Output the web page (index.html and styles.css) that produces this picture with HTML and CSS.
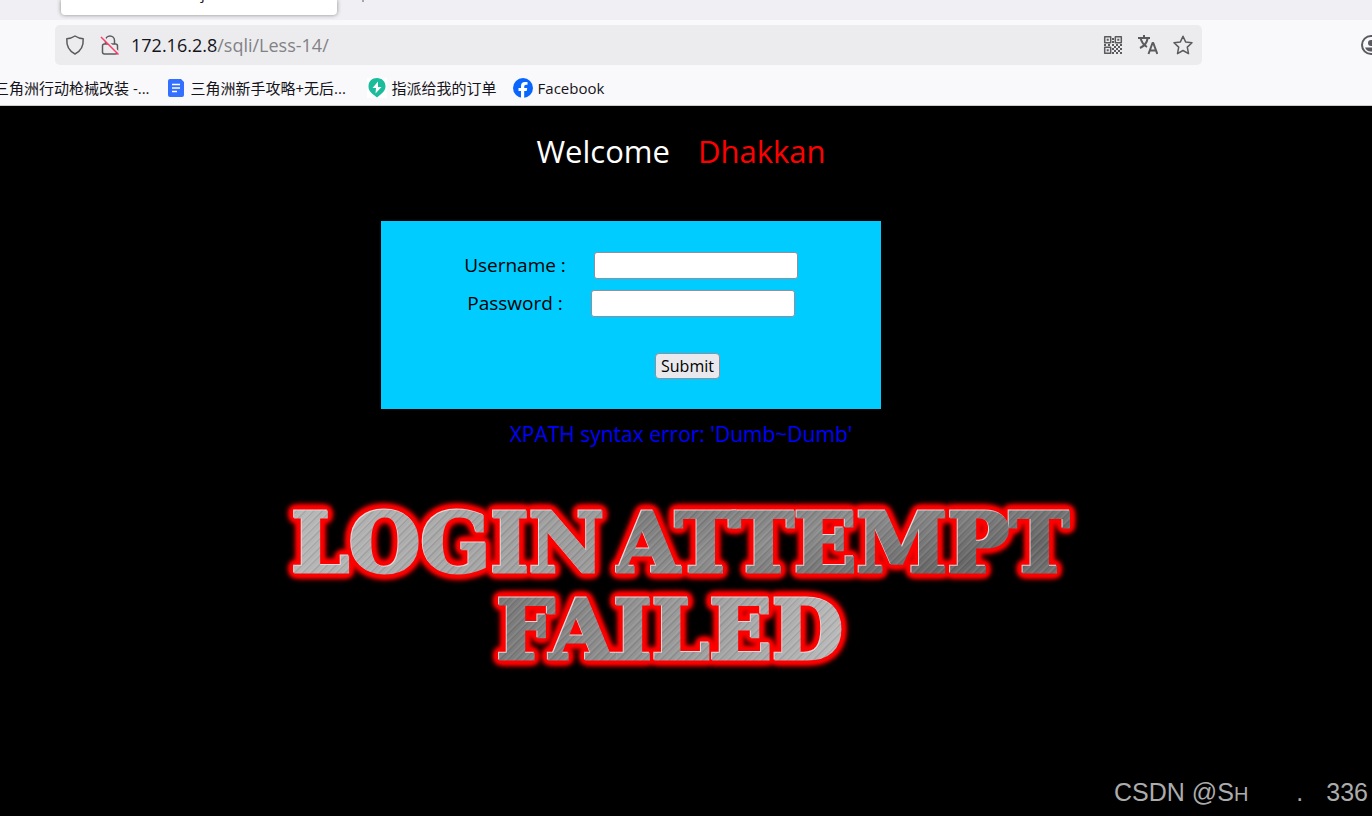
FILE: index.html
```html
<!DOCTYPE html>
<html lang="zh-CN">
<head>
<meta charset="utf-8">
<meta name="viewport" content="width=device-width, initial-scale=1">
<title>Less-14</title>
<link rel="stylesheet" href="styles.css">
</head>
<body>
<header class="browser">
  <div class="tabstrip">
    <div class="tab"><span class="tab-title">j</span></div>
    <button class="new-tab" type="button" aria-label="New tab"><svg width="16" height="16" viewBox="0 0 16 16"><path d="M8 1v15M1 8h14"/></svg></button>
  </div>
  <div class="toolbar">
    <div class="urlbar">
      <svg class="icon" width="20" height="20" viewBox="0 0 20 20"><path d="M10 1c2.500 1.700 5.300 2.600 8.200 2.800.4 7-2 12.200-8.200 15.200C3.800 16 1.400 10.800 1.800 3.800 4.700 3.600 7.500 2.700 10 1z"/></svg>
      <svg class="icon" width="20" height="20" viewBox="0 0 20 20"><path d="M5.500 9V5.500a4.500 4.500 0 0 1 9 0V9M4.500 9h11q2 0 2 2v6q0 2-2 2h-11q-2 0-2-2v-6q0-2 2-2z"/><path class="slash-gap" d="M3 2l17 17"/><path class="slash" d="M1 2l17.500 17.500"/></svg>
      <div class="address"><span class="host">172.16.2.8</span>/sqli/Less-14/</div>
      <div class="actions">
        <svg class="icon" width="20" height="20" viewBox="0 0 20 20"><path d="M1.700 1.700h6v6h-6zM12.300 1.700h6v6h-6zM1.700 12.300h6v6h-6z"/><path class="solid" d="M3.700 3.700h2v2h-2zM14.300 3.700h2v2h-2zM3.700 14.300h2v2h-2zM9 3h2v2H9zM9 6h2v2H9zM1 9h2v2H1zM5 9h2v2H5zM9 9h2v2H9zM13 9h2v2h-2zM17 9h2v2h-2zM11 11h2v2h-2zM15 11h2v2h-2zM9 13h2v2H9zM13 13h2v2h-2zM17 13h2v2h-2zM11 15h2v2h-2zM15 15h2v2h-2zM9 17h2v2H9zM13 17h2v2h-2zM17 17h2v2h-2z"/></svg>
        <svg class="icon" width="20" height="20" viewBox="0 0 20 20"><path class="bold" d="M0 3h12M6 0v3M2 13c4.500-2 7-5.500 7.700-10M2.500 3c1 4 3 7 6.500 9M10.500 19l4-11h.8l4 11M12 15.500h6"/></svg>
        <svg class="icon" width="20" height="20" viewBox="0 0 20 20"><path d="M10 1.200l2.600 5.700 6.400.8-4.700 4.400 1.200 6.500L10 15.500l-5.500 3.100 1.200-6.500L1 7.700l6.400-.8z"/></svg>
      </div>
    </div>
    <svg class="icon account" width="20" height="20" viewBox="0 0 20 20"><circle class="bold" cx="10" cy="10" r="9"/><circle class="solid" cx="10" cy="8" r="3"/><path class="solid" d="M4 12.500h12q-1.500 4-6 4t-6-4z"/></svg>
  </div>
  <nav class="bookmarks">
    <a class="bookmark first" href="#">三角洲行动枪械改装 -...</a>
    <a class="bookmark clipped" href="#"><svg width="20" height="20" viewBox="0 0 20 20"><path fill="#3370ff" d="M4 1h11l3 3v13q0 2-2 2H4q-2 0-2-2V3q0-2 2-2z"/><path stroke="#fff" stroke-width="1.500" d="M6 6.500h8M6 10h8M6 13.500h5"/></svg>三角洲新手攻略+无后...</a>
    <a class="bookmark" href="#"><svg width="20" height="20" viewBox="0 0 20 20"><path fill="#fff" d="M0 0h20v20H0z"/><path fill="#1abc9c" d="M10 0c5 0 8.500 3.500 8.500 8.500S14 16 10 19.500C6 16 1.500 14 1.500 8.500S5 0 10 0z"/><path fill="#fff" d="M11 3.500L5.500 10H9l-.5 5.500L14.500 9H11z"/></svg>指派给我的订单</a>
    <a class="bookmark" href="#"><svg width="20" height="20" viewBox="0 0 20 20"><circle cx="10" cy="10" r="10" fill="#0866ff"/><path fill="#fff" d="M8 19.800V13H5.500v-3H8V8q0-4 4-4h2.500v2.800H13q-1.800 0-1.800 1.700V10h3l-.5 3h-2.500v6.900q-1.600.3-3.200-.1z"/></svg>Facebook</a>
  </nav>
</header>
<main class="page">
  <h1 class="welcome">Welcome <span class="name">Dhakkan</span></h1>
  <form class="login">
    <div class="field"><label for="uname">Username :</label><input id="uname" type="text"></div>
    <div class="field"><label for="passwd">Password :</label><input id="passwd" type="text"></div>
    <button class="submit" type="submit">Submit</button>
  </form>
  <p class="error">XPATH syntax error: 'Dumb~Dumb'</p>
  <h2 class="banner">
    <span class="line"><span class="metal light">LOGIN</span> <span class="metal dark">ATTEMPT</span></span>
    <span class="line second"><span class="metal rising">FAILED</span></span>
  </h2>
  <p class="watermark"><span>CSDN @S<small>H</small></span><span class="dot">.</span><span>336</span></p>
</main>
</body>
</html>
```
FILE: styles.css
```css
* { box-sizing: border-box; }
body {
  margin: 0;
  min-height: 100vh;
  display: flex;
  flex-direction: column;
  background: #000;
  font-family: "Open Sans", "Noto Sans CJK SC", sans-serif;
  overflow: hidden;
}
.browser { background: #f9f9fb; border-bottom: 1px solid #ccc; overflow: hidden; }
.tabstrip { display: flex; align-items: flex-end; height: 20px; padding: 0 61px 5px; background: #f0f0f4; gap: 18px; }
.tab {
  width: 276px;
  height: 15px;
  padding-left: 140px;
  background: #fff;
  border-radius: 0 0 4px 4px;
  box-shadow: 0 0 4px #888;
  color: #15141a;
  font-size: 15px;
  line-height: 18px;
}
.tab-title { display: flex; align-items: flex-end; height: 2px; }
.new-tab { display: flex; align-items: flex-end; width: 16px; height: 15px; padding: 0 0 13px; border: 0; background: none; }
.new-tab svg { flex: none; stroke: #5b5b66; stroke-width: 1; }
.toolbar { display: flex; align-items: center; justify-content: space-between; padding: 5px 0 5px 55px; overflow: hidden; }
.urlbar {
  display: flex;
  align-items: center;
  flex: 0 1 1147px;
  height: 40px;
  padding: 0 9px 0 10px;
  border-radius: 5px;
  background: #ececee;
}
.icon { flex: none; fill: none; stroke: #5b5b5f; stroke-width: 1.5; stroke-linejoin: round; }
.urlbar > .icon { margin-right: 15px; }
.urlbar > .icon + .icon { margin-right: 11px; }
.icon .solid { fill: #5b5b5f; stroke: none; }
.icon .bold { stroke-width: 2; }
.icon .slash { stroke: #ff3b6b; }
.icon .slash-gap { stroke: #ececee; stroke-width: 2; }
.address { flex: 1; font-size: 18px; color: #828286; }
.host { color: #15141a; }
.actions { display: flex; gap: 15px; }
.account { margin-right: -9px; }
.bookmarks { display: flex; align-items: center; gap: 16px; height: 35px; }
.bookmark { display: flex; flex: none; align-items: center; gap: 5px; color: #15141a; font-size: 15px; line-height: 20px; text-decoration: none; white-space: nowrap; }
.bookmark.first { margin-left: -6px; }
.bookmark.clipped { width: 185px; }
.page { flex: 1; display: flex; flex-direction: column; align-items: center; padding-right: 10px; }
.welcome { margin: 23px 0 0; font-size: 31px; line-height: 44px; font-weight: 400; color: #fff; }
.name { margin-left: 20px; color: #f00; }
.login {
  display: flex;
  flex-direction: column;
  align-items: center;
  width: 500px;
  margin: 48px 100px 0 0;
  padding: 31px 0 30px;
  background: #0cf;
}
.field { display: flex; align-items: center; gap: 28px; margin-bottom: 11px; font-size: 19px; line-height: 27px; }
.field input { width: 204px; height: 27px; border: 1px solid #8f8f9d; border-radius: 3px; background: #fff; }
.submit {
  margin: 25px 0 0 113px;
  height: 26px;
  padding: 0 5px;
  border: 1px solid #8f8f9d;
  border-radius: 4px;
  background: #e9e9ed;
  color: #000;
  font: 16px/24px "Open Sans", sans-serif;
}
.error { margin: 11px 0 0; color: #00f; font-size: 21px; line-height: 28px; }
.banner {
  display: flex;
  flex-direction: column;
  align-items: center;
  margin: 52px 0 0;
  font: bold 82px/87px "DejaVu Serif", serif;
  white-space: nowrap;
  filter: drop-shadow(-1px -1px 0 #ddd) drop-shadow(0 0 2px #f00) drop-shadow(0 0 2px #f00) drop-shadow(0 0 2px #f00) drop-shadow(0 0 2px #f00) drop-shadow(0 0 1px #f00);
}
.line { display: flex; gap: 12px; }
.second { margin-right: 22px; }
.metal {
  background-clip: text;
  -webkit-background-clip: text;
  -webkit-text-stroke: 3px transparent;
  color: transparent;
}
.light {
  background-image:
    repeating-linear-gradient(135deg, #fff0 0 2px, #ffffff14 3px 4px, #00000014 5px 6px),
    linear-gradient(100deg, #b8b8b8, #999);
}
.dark {
  background-image:
    repeating-linear-gradient(135deg, #fff0 0 2px, #ffffff14 3px 4px, #00000014 5px 6px),
    linear-gradient(165deg, #777, #8d8d8d 40%, #666 75%, #777);
}
.rising {
  background-image:
    repeating-linear-gradient(135deg, #fff0 0 2px, #ffffff14 3px 4px, #00000014 5px 6px),
    linear-gradient(100deg, #777, #999 50%, #bbb);
}
.watermark {
  display: flex;
  align-self: flex-end;
  margin: auto -6px 6px 0;
  color: #acacac;
  font: 25px/32px "Liberation Sans", sans-serif;
}
.watermark small { font-size: 20px; }
.dot { margin: 0 23px 0 48px; }
```
